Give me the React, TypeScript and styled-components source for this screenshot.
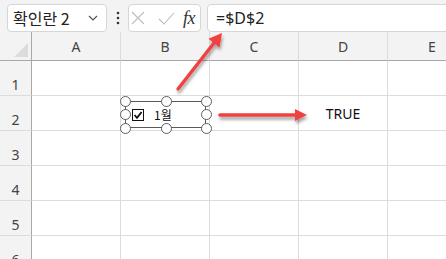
import React from "react";
import styled, { createGlobalStyle } from "styled-components";

const Global = createGlobalStyle`
  html, body { margin: 0; padding: 0; background: #fff; }
  body { font-family: "Noto Sans", "Noto Sans CJK KR", sans-serif; }
`;

const Page = styled.div`
  position: relative;
  width: 446px;
  height: 259px;
  overflow: hidden;
  background: #fff;
`;

const Toolbar = styled.div`
  display: flex;
  align-items: flex-start;
  height: 32px;
  padding: 4px 0 0 7px;
  box-sizing: border-box;
  background: #f3f3f3;
`;

const Box = styled.div<{ $w?: number; $grow?: boolean }>`
  box-sizing: border-box;
  height: 28px;
  ${(p) => (p.$w ? `width: ${p.$w}px;` : "")}
  ${(p) => (p.$grow ? "flex: 1; margin-right: -8px;" : "")}
  background: #fff;
  border: 1px solid #d6d6d6;
  border-radius: 4px;
  display: flex;
  align-items: center;
`;

const NameText = styled.span`
  font-family: "Noto Sans CJK KR", sans-serif;
  font-size: 16px;
  color: #222;
  padding-left: 5px;
  flex: 1;
`;

const Dots = styled.div<{ $w?: number }>`
  width: ${(p) => p.$w ?? 21}px;
  height: 28px;
  display: flex;
  align-items: center;
  justify-content: center;
`;

const FormulaText = styled.span`
  font-family: "Noto Sans", sans-serif;
  font-size: 16px;
  color: #222;
  padding-left: 8px;
`;

const FxText = styled.span`
  font-family: "Liberation Serif", serif;
  font-style: italic;
  font-size: 18px;
  color: #333;
  margin-left: 2px;
  letter-spacing: -0.5px;
`;

const Sheet = styled.div`
  display: grid;
  grid-template-columns: 32px repeat(5, 89px);
  grid-template-rows: 29px repeat(6, 35px);
`;

const Corner = styled.div`
  position: relative;
  box-sizing: border-box;
  background: #f3f3f3;
  border-right: 1px solid #a8a8a8;
  border-bottom: 1px solid #a8a8a8;
  &::after {
    content: "";
    position: absolute;
    left: 14px;
    top: 11px;
    width: 14px;
    height: 14px;
    background: #dcdcdc;
    clip-path: polygon(100% 0, 100% 100%, 0 100%);
  }
`;

const ColHead = styled.div`
  box-sizing: border-box;
  background: #f3f3f3;
  border-right: 1px solid #dcdcdc;
  border-bottom: 1px solid #a8a8a8;
  display: flex;
  align-items: center;
  justify-content: center;
  font-size: 14px;
  color: #444;
`;

const RowHead = styled.div`
  box-sizing: border-box;
  background: #f3f3f3;
  border-right: 1px solid #a8a8a8;
  border-bottom: 1px solid #dcdcdc;
  display: flex;
  align-items: flex-end;
  justify-content: center;
  padding-bottom: 2px;
  line-height: 16px;
  font-size: 14px;
  color: #444;
`;

const Cell = styled.div`
  box-sizing: border-box;
  border-right: 1px solid #dcdcdc;
  border-bottom: 1px solid #dcdcdc;
  display: flex;
  align-items: center;
  justify-content: center;
  font-family: "Noto Sans", sans-serif;
  font-size: 14px;
  color: #111;
  padding-top: 1px;
`;

const Control = styled.div`
  position: absolute;
  left: 125px;
  top: 101px;
  width: 81px;
  height: 27px;
  box-sizing: border-box;
  border: 1px solid #5a5a5a;
  display: flex;
  align-items: center;
  padding-left: 6px;
  gap: 10px;
`;

const CheckBox = styled.div`
  width: 12px;
  height: 12px;
  box-sizing: border-box;
  border: 1px solid #111;
  background: #fff;
  display: flex;
  align-items: center;
  justify-content: center;
`;

const Label = styled.span`
  font-family: "Noto Sans CJK KR", sans-serif;
  font-size: 12px;
  color: #111;
`;

const Handle = styled.div<{ $x: number; $y: number }>`
  position: absolute;
  left: ${(p) => p.$x}px;
  top: ${(p) => p.$y}px;
  width: 9px;
  height: 9px;
  margin: -5px 0 0 -5px;
  border-radius: 50%;
  border: 1.4px solid #5e5e5e;
  background: #fff;
`;

const Overlay = styled.svg`
  position: absolute;
  left: 0;
  top: 0;
  pointer-events: none;
`;

const cols = ["A", "B", "C", "D", "E"];
const rows = [1, 2, 3, 4, 5, 6];
const handles = [
  [125, 101],
  [166, 101],
  [206, 101],
  [125, 114],
  [206, 114],
  [125, 128],
  [166, 128],
  [206, 128],
];

export default function App() {
  return (
    <>
      <Global />
      <Page>
        <Toolbar>
          <Box $w={100}>
            <NameText>확인란 2</NameText>
            <svg width="20" height="10" viewBox="0 0 20 10" style={{ marginRight: 3 }}>
              <path d="M6 3 L10 7 L14 3" fill="none" stroke="#555" strokeWidth="1.2" />
            </svg>
          </Box>
          <Dots>
            <svg width="4" height="14" viewBox="0 0 4 14">
              <circle cx="2" cy="2" r="1.3" fill="#333" />
              <circle cx="2" cy="7" r="1.3" fill="#333" />
              <circle cx="2" cy="12" r="1.3" fill="#333" />
            </svg>
          </Dots>
          <Box $w={73}>
            <svg width="50" height="16" viewBox="0 0 50 16" style={{ marginLeft: 2 }}>
              <path d="M1 2 L13 14 M13 2 L1 14" stroke="#bdbdbd" strokeWidth="1.1" fill="none" />
              <path d="M28 9 L33 14 L43 3" stroke="#bdbdbd" strokeWidth="1.1" fill="none" />
            </svg>
            <FxText>fx</FxText>
          </Box>
          <Dots $w={6} />
          <Box $grow>
            <FormulaText>=$D$2</FormulaText>
          </Box>
        </Toolbar>
        <Sheet>
          <Corner />
          {cols.map((c) => (
            <ColHead key={c}>{c}</ColHead>
          ))}
          {rows.map((r) => (
            <React.Fragment key={r}>
              <RowHead>{r}</RowHead>
              {cols.map((c) => (
                <Cell key={c}>{r === 2 && c === "D" ? "TRUE" : ""}</Cell>
              ))}
            </React.Fragment>
          ))}
        </Sheet>
        <Control>
          <CheckBox>
            <svg width="10" height="10" viewBox="0 0 10 10">
              <path d="M1.5 5 L4 7.8 L8.6 2" fill="none" stroke="#111" strokeWidth="1.8" />
            </svg>
          </CheckBox>
          <Label>1월</Label>
        </Control>
        {handles.map(([x, y], i) => (
          <Handle key={i} $x={x} $y={y} />
        ))}
        <Overlay width="446" height="259" viewBox="0 0 446 259">
          <defs>
            <filter id="sh" x="-20%" y="-20%" width="140%" height="160%">
              <feDropShadow dx="1" dy="3" stdDeviation="1.6" floodColor="#000" floodOpacity="0.35" />
            </filter>
          </defs>
          <g filter="url(#sh)" fill="#f0403f" stroke="#f0403f">
            <line x1="178" y1="89" x2="214" y2="43" strokeWidth="3.4" strokeLinecap="round" />
            <polygon points="222,33 219.5,47.5 208.5,38.8" stroke="none" />
            <line x1="220" y1="115" x2="297" y2="115" strokeWidth="3.6" strokeLinecap="round" />
            <polygon points="307,115 295,109 295,121" stroke="none" />
          </g>
        </Overlay>
      </Page>
    </>
  );
}
